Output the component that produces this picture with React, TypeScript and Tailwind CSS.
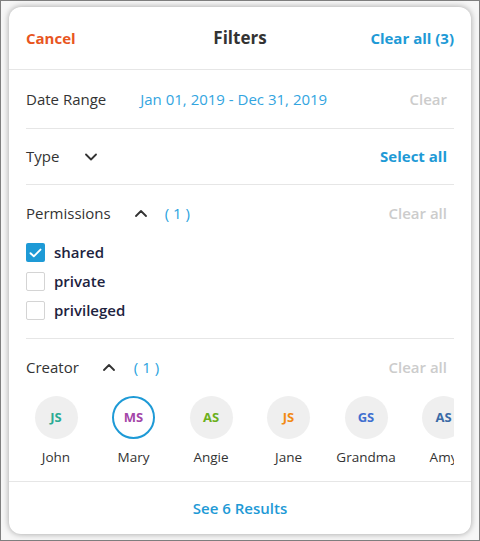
import React from 'react';

const FONT = { fontFamily: '"Open Sans", "Noto Sans", sans-serif' };

const PERMS = [
  { label: 'shared', checked: true },
  { label: 'private', checked: false },
  { label: 'privileged', checked: false },
];

const CREATORS = [
  { initials: 'JS', name: 'John', color: 'text-[#2bab94]' },
  { initials: 'MS', name: 'Mary', color: 'text-[#a446a8]', selected: true },
  { initials: 'AS', name: 'Angie', color: 'text-[#6cb01c]' },
  { initials: 'JS', name: 'Jane', color: 'text-[#f28a14]' },
  { initials: 'GS', name: 'Grandma', color: 'text-[#3f6fd0]' },
  { initials: 'AS', name: 'Amy', color: 'text-[#3a6aa6]' },
];

function Chevron({ up }: { up?: boolean }) {
  return (
    <svg width="12" height="8" viewBox="0 0 12 8" fill="none" className="shrink-0">
      <path d={up ? 'M1 7L6 2L11 7' : 'M1 1.5L6 6.5L11 1.5'} stroke="#333" strokeWidth="1.8" strokeLinecap="round" strokeLinejoin="round" />
    </svg>
  );
}

function Count() {
  return <span className="text-[15px] text-[#2aa2de] whitespace-pre">( 1 )</span>;
}

export default function App() {
  return (
    <div className="w-[480px] h-[541px] bg-[#f6f6f6] border border-[#7f7f7f] pl-2 pt-[6px]" style={FONT}>
      <div className="w-[462px] h-[527px] bg-white rounded-xl shadow-[0_0_6px_rgba(0,0,0,0.35)] flex flex-col overflow-hidden">
        {/* header */}
        <div className="h-[63px] shrink-0 border-b border-[#e6e6e6] px-[17px] flex items-center justify-between relative">
          <span className="text-[15px] font-bold text-[#e8561f]">Cancel</span>
          <span className="absolute left-0 right-0 text-center text-[17px] font-bold text-[#333] pointer-events-none">Filters</span>
          <span className="text-[15px] font-bold text-[#1e9ad6]">Clear all (3)</span>
        </div>

        <div className="px-[17px] flex-1 flex flex-col">
          {/* date range */}
          <div className="h-[59px] shrink-0 border-b border-[#e6e6e6] flex items-center">
            <span className="text-[15px] text-[#333]">Date Range</span>
            <span className="ml-[34px] text-[15px] text-[#33a5df]">Jan 01, 2019 - Dec 31, 2019</span>
            <span className="ml-auto mr-[7px] text-[15px] font-semibold text-[#cccccc]">Clear</span>
          </div>

          {/* type */}
          <div className="h-[56px] shrink-0 border-b border-[#e6e6e6] flex items-center">
            <span className="text-[15px] text-[#333]">Type</span>
            <span className="ml-[26px]"><Chevron /></span>
            <span className="ml-auto mr-[7px] text-[15px] font-bold text-[#1e9ad6]">Select all</span>
          </div>

          {/* permissions */}
          <div className="shrink-0 border-b border-[#e6e6e6] pt-[16px] pb-[13px]">
            <div className="h-[24px] flex items-center">
              <span className="text-[15px] text-[#333]">Permissions</span>
              <span className="ml-[24px] mr-[18px]"><Chevron up /></span>
              <Count />
              <span className="ml-auto mr-[7px] text-[15px] font-semibold text-[#cccccc]">Clear all</span>
            </div>
            <div className="mt-[13px] flex flex-col">
              {PERMS.map(p => (
                <div key={p.label} className="h-[29px] flex items-center gap-[9px]">
                  {p.checked ? (
                    <span className="w-[19px] h-[19px] rounded-[2px] bg-[#1e9ad6] flex items-center justify-center">
                      <svg width="13" height="10" viewBox="0 0 13 10" fill="none">
                        <path d="M1.5 5.2L4.8 8.3L11.5 1.6" stroke="white" strokeWidth="1.9" strokeLinecap="round" strokeLinejoin="round" />
                      </svg>
                    </span>
                  ) : (
                    <span className="w-[19px] h-[19px] rounded-[2px] border border-[#d4d4d4] bg-white" />
                  )}
                  <span className="text-[15px] font-semibold text-[#1d2340]">{p.label}</span>
                </div>
              ))}
            </div>
          </div>

          {/* creator */}
          <div className="shrink-0 pt-[16px] pb-[14px]">
            <div className="h-[24px] flex items-center">
              <span className="text-[15px] text-[#333]">Creator</span>
              <span className="ml-[24px] mr-[19px]"><Chevron up /></span>
              <Count />
              <span className="ml-auto mr-[7px] text-[15px] font-semibold text-[#cccccc]">Clear all</span>
            </div>
            <div className="mt-[17px] flex gap-[17.5px] overflow-hidden">
              {CREATORS.map((c, i) => (
                <div key={i} className="w-[60px] shrink-0 flex flex-col items-center">
                  <div
                    className={`w-[43px] h-[43px] rounded-full flex items-center justify-center text-[13px] font-bold ${c.color} ${c.selected ? 'bg-white border-2 border-[#1e9ad6]' : 'bg-[#efefef]'}`}
                  >
                    {c.initials}
                  </div>
                  <span className="mt-[8px] h-[20px] leading-[20px] text-[13.5px] text-[#333] whitespace-nowrap">{c.name}</span>
                </div>
              ))}
            </div>
          </div>
        </div>

        {/* footer */}
        <div className="h-[53px] shrink-0 border-t border-[#e6e6e6] flex items-center justify-center">
          <span className="text-[15px] font-semibold text-[#1e9ad6]">See 6 Results</span>
        </div>
      </div>
    </div>
  );
}
